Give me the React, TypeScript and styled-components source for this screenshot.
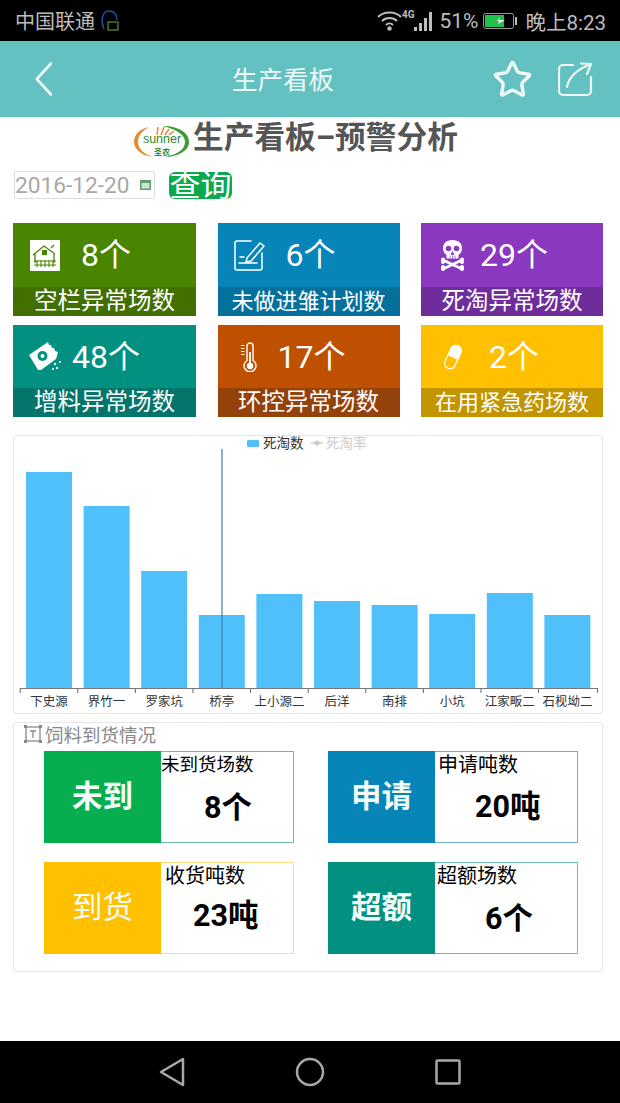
import React from 'react';
import styled, { createGlobalStyle } from 'styled-components';
import { Star } from 'lucide-react';

const FONT = `Roboto, "Noto Sans CJK SC", "Noto Sans", sans-serif`;

const GlobalStyle = createGlobalStyle`
  html, body { margin: 0; padding: 0; background: #fff; }
  body { font-family: ${FONT}; }
`;

const tiles = [
  { value: '8个', label: '空栏异常场数', labelSize: 23.5, color: '#4a8500', band: '#417001', pad: 17, gap: 21, icon: 'barn' },
  { value: '6个', label: '未做进雏计划数', labelSize: 22, color: '#0785b8', band: '#05709c', pad: 16, gap: 21, icon: 'note' },
  { value: '29个', label: '死淘异常场数', labelSize: 23.5, color: '#8a38c0', band: '#6f2d9c', pad: 20, gap: 16, icon: 'skull' },
  { value: '48个', label: '增料异常场数', labelSize: 23.5, color: '#029181', band: '#03756b', pad: 16, gap: 11, icon: 'bag' },
  { value: '17个', label: '环控异常场数', labelSize: 23.5, color: '#bf5000', band: '#94410a', pad: 23, gap: 21, icon: 'thermo' },
  { value: '2个', label: '在用紧急药场数', labelSize: 22, color: '#ffc000', band: '#c29500', pad: 22, gap: 26, icon: 'pill' },
];

const bars = [
  { name: '下史源', top: 472 },
  { name: '界竹一', top: 506 },
  { name: '罗家坑', top: 571 },
  { name: '桥亭', top: 615 },
  { name: '上小源二', top: 594 },
  { name: '后洋', top: 601 },
  { name: '南排', top: 605 },
  { name: '小坑', top: 614 },
  { name: '江家畈二', top: 593 },
  { name: '石枧坳二', top: 615 },
];

const feeds = [
  { tag: '未到', tagWeight: 700, color: '#07ae50', line: '#6fb8a8', tagWidth: 117, title: '未到货场数', titleSize: 18.5, titlePad: 0, value: '8个', valuePad: 43, valueTop: 10 },
  { tag: '申请', tagWeight: 700, color: '#0785b8', line: '#6fb0c8', tagWidth: 107, title: '申请吨数', titleSize: 20, titlePad: 3, value: '20吨', valuePad: 40, valueTop: 9 },
  { tag: '到货', tagWeight: 400, color: '#ffc000', line: '#ffe07a', tagWidth: 117, title: '收货吨数', titleSize: 20, titlePad: 4, value: '23吨', valuePad: 32, valueTop: 7 },
  { tag: '超额', tagWeight: 700, color: '#029181', line: '#6fb8b8', tagWidth: 107, title: '超额场数', titleSize: 20, titlePad: 2, value: '6个', valuePad: 50, valueTop: 10 },
];

const Page = styled.div`
  width: 620px;
  height: 1103px;
  display: flex;
  flex-direction: column;
  overflow: hidden;
  background: #fff;
`;

const StatusBar = styled.div`
  height: 41px;
  background: #000;
  color: #bdbdbd;
  font-size: 20px;
  display: flex;
  align-items: center;
  justify-content: space-between;
  padding: 0 14px 0 15px;
`;

const StatusGroup = styled.div`
  display: flex;
  align-items: center;
`;

const Battery = styled.span`
  font-size: 21px;
  margin: 0 5px 0 5px;
`;

const Clock = styled.span`
  font-size: 20.5px;
  margin-left: 8px;
`;

const Header = styled.div`
  height: 76px;
  background: #64c1c1;
  color: #eef8f8;
  display: flex;
  align-items: center;
  padding: 0 26px 0 35px;
`;

const HeaderTitle = styled.div`
  margin: 2px 0 0 180px;
  font-size: 25.5px;
  line-height: 38px;
`;

const HeaderActions = styled.div`
  margin-left: auto;
  display: flex;
  align-items: center;
  gap: 25px;
`;

const Content = styled.div`
  flex: 1;
`;

const TitleRow = styled.div`
  height: 40px;
  display: flex;
  align-items: flex-start;
  padding-left: 133px;
  gap: 3px;
`;

const LogoSlot = styled.div`
  margin-top: 8px;
`;

const MainTitle = styled.div`
  font-size: 30.7px;
  font-weight: 700;
  color: #555;
  line-height: 42px;
`;

const QueryRow = styled.div`
  margin-top: 14px;
  height: 28px;
  display: flex;
  align-items: center;
  padding-left: 14px;
  gap: 14px;
`;

const DateBox = styled.div`
  width: 141px;
  height: 28px;
  box-sizing: border-box;
  border: 1px solid #ddd;
  border-radius: 2px;
  color: #a8a8a8;
  font-size: 22.7px;
  display: flex;
  align-items: center;
  justify-content: space-between;
  padding: 0 3px 0 0;
`;

const QueryButton = styled.div`
  width: 63px;
  height: 27px;
  border-radius: 6px;
  background: #09a94c;
  color: #fff;
  font-size: 31px;
  line-height: 27px;
  text-align: center;
  white-space: nowrap;
`;

const TileGrid = styled.div`
  margin: 24px 17px 0 13px;
  display: grid;
  grid-template-columns: 183px 182px 182px;
  grid-template-rows: 93px 92px;
  column-gap: 21.5px;
  row-gap: 9px;
`;

const Tile = styled.div<{ $color: string }>`
  background: ${(p) => p.$color};
  color: #fff;
  display: flex;
  flex-direction: column;
`;

const TileHead = styled.div<{ $pad: number; $gap: number }>`
  flex: 1;
  display: flex;
  align-items: center;
  padding-left: ${(p) => p.$pad}px;
  gap: ${(p) => p.$gap}px;
`;

const TileValue = styled.div`
  font-size: 32px;
  line-height: 40px;
`;

const TileBand = styled.div<{ $color: string; $size: number }>`
  height: 29px;
  background: ${(p) => p.$color};
  font-size: ${(p) => p.$size}px;
  line-height: 29px;
  text-align: center;
  white-space: nowrap;
`;

const ChartCard = styled.div`
  margin: 18px 17px 0 13px;
  height: 279px;
  box-sizing: border-box;
  border: 1px solid #e6e6e6;
  border-radius: 3px;
`;

const ChartSvg = styled.svg`
  display: block;
  overflow: visible;
`;

const FeedCard = styled.div`
  margin: 8px 17px 0 13px;
  height: 250px;
  box-sizing: border-box;
  border: 1px solid #e6e6e6;
  border-radius: 3px;
  padding-left: 10px;
`;

const FeedHeading = styled.div`
  height: 28px;
  box-sizing: border-box;
  padding-bottom: 6px;
  display: flex;
  align-items: center;
  gap: 3px;
  color: #888;
  font-size: 18.5px;
`;

const FeedGrid = styled.div`
  margin-left: 20px;
  display: grid;
  grid-template-columns: 250px 250px;
  grid-template-rows: 92px 92px;
  column-gap: 34px;
  row-gap: 19px;
`;

const FeedItem = styled.div<{ $line: string }>`
  display: flex;
  box-sizing: border-box;
  border: 1px solid ${(p) => p.$line};
`;

const FeedTag = styled.div<{ $color: string; $width: number; $weight: number }>`
  width: ${(p) => p.$width}px;
  margin: -1px 0 -1px -1px;
  background: ${(p) => p.$color};
  color: #f4fbf6;
  font-size: 30.5px;
  font-weight: ${(p) => p.$weight};
  display: flex;
  align-items: center;
  justify-content: center;
  padding-bottom: 6px;
  box-sizing: border-box;
`;

const FeedBody = styled.div`
  flex: 1;
  color: #000;
`;

const FeedTitle = styled.div<{ $size: number; $pad: number }>`
  font-size: ${(p) => p.$size}px;
  line-height: 26px;
  padding-left: ${(p) => p.$pad}px;
  white-space: nowrap;
`;

const FeedValue = styled.div<{ $pad: number; $top: number }>`
  margin-top: ${(p) => p.$top}px;
  font-size: 30.5px;
  font-weight: 700;
  line-height: 40px;
  padding-left: ${(p) => p.$pad}px;
`;

const NavBar = styled.div`
  height: 62px;
  background: #000;
  display: flex;
  align-items: center;
  justify-content: center;
  gap: 110px;
`;

const TileIcon = ({ name }: { name: string }) => {
  switch (name) {
    case 'barn':
      return (
        <svg width="30" height="31" viewBox="0 0 30 31">
          <rect width="30" height="31" fill="#fff" rx="1" />
          <path d="M3 15 14 6l11 8M5 14v9M24 14v9M21 8l3-3" fill="none" stroke="#4a8500" strokeWidth="1.3" />
          <rect x="12" y="10" width="5" height="5" fill="#4a8500" />
          <path d="M4 21h22M4 25h22M7 20v7M11 20v7M15 20v7M19 20v7M23 20v7" stroke="#4a8500" strokeWidth="1.1" />
        </svg>
      );
    case 'note':
      return (
        <svg width="31" height="31" viewBox="0 0 31 31" fill="none" stroke="#fff" strokeWidth="1.5" strokeLinecap="round" strokeLinejoin="round">
          <path d="M17 1H3a2 2 0 0 0-2 2v25a2 2 0 0 0 2 2h23a2 2 0 0 0 2-2V13" />
          <path d="M13 18 26 3l4 3-13 15-5 1zM6 17h4M5 23h18" />
        </svg>
      );
    case 'skull':
      return (
        <svg width="23" height="31" viewBox="0 0 23 31" fill="#fff">
          <path d="M11.500 0C5 0 2 3.500 2 8.500c0 3 1.500 5 3.500 6.500v3.500h12V15c2-1.500 3.500-3.500 3.500-6.500C21 3.500 18 0 11.500 0z" />
          <circle cx="7.500" cy="8.500" r="2.800" fill="#8a38c0" />
          <circle cx="15.500" cy="8.500" r="2.800" fill="#8a38c0" />
          <path d="M11.500 11.500l-1.500 3h3zM9 15.500v3M11.500 15.500v3M14 15.500v3" fill="#8a38c0" stroke="#8a38c0" strokeWidth="0.7" />
          <path d="M3 20.500l17 8M20 20.500 3 28.500" stroke="#fff" strokeWidth="2.800" />
          <g>
            <circle cx="2" cy="19.500" r="2" /><circle cx="21" cy="19.500" r="2" />
            <circle cx="2" cy="22" r="2" /><circle cx="21" cy="22" r="2" />
            <circle cx="2" cy="27" r="2" /><circle cx="21" cy="27" r="2" />
            <circle cx="2" cy="29" r="2" /><circle cx="21" cy="29" r="2" />
          </g>
        </svg>
      );
    case 'bag':
      return (
        <svg width="32" height="29" viewBox="0 0 32 29">
          <path d="M0 13 19 0l1 3 2 0 1 3 2 0 1 3 3 1-1 4-1 3-15 11-3 0z" fill="#fff" />
          <circle cx="13.500" cy="14" r="5" fill="#029181" />
          <circle cx="13.500" cy="14" r="2" fill="#fff" />
          <g fill="#fff">
            <circle cx="31" cy="20" r="1" /><circle cx="26" cy="22" r="1.200" />
            <circle cx="28" cy="26" r="1.200" /><circle cx="24" cy="27" r="1" />
          </g>
        </svg>
      );
    case 'thermo':
      return (
        <svg width="16" height="30" viewBox="0 0 16 30" fill="none" stroke="#fff" strokeWidth="1.4">
          <path d="M9 1a3 3 0 0 1 3 3v14.500a6 6 0 1 1-6 0V4a3 3 0 0 1 3-3z" />
          <circle cx="9" cy="24" r="3.200" fill="#fff" stroke="none" />
          <path d="M9 24V10" strokeWidth="1.800" />
          <path d="M0 3.500h3.500M0 6.500h3.500M0 9.500h3.500M0 12.500h3.500" strokeWidth="1" />
        </svg>
      );
    default:
      return (
        <svg width="20" height="26" viewBox="0 0 20 26">
          <g transform="rotate(25 10 13)">
            <path d="M4 13V6a6 6 0 0 1 12 0v7z" fill="#fff" />
            <path d="M4.600 13v7a5.400 5.400 0 0 0 10.800 0v-7z" fill="none" stroke="#fff" strokeWidth="1.200" />
          </g>
        </svg>
      );
  }
};

const Logo = () => (
  <svg width="57" height="33" viewBox="0 0 57 33" style={{ display: 'block' }}>
    <path d="M16 2C6 4 1 10 1 17c0 7 8 14 19 15C11 29 5 24 5 17 5 10 10 5 16 2z" fill="#e8892b" />
    <path d="M30 1c14 0 26 6 26 16 0 9-12 15-24 15 11-2 20-7 20-15 0-8-10-13-22-16z" fill="#3b9a33" />
    <path d="M24 10l1-8M28 10l3-8M32 10l4-6M36 10l5-4" stroke="#e8892b" strokeWidth="1.500" />
    <text x="29" y="18" textAnchor="middle" fontSize="12.500" fill="#2e8b2e" fontFamily="Liberation Sans, sans-serif">sunner</text>
    <text x="29" y="30" textAnchor="middle" fontSize="8" fontWeight="700" fill="#2e8b2e" fontFamily="Noto Sans CJK SC, sans-serif">圣农</text>
  </svg>
);

// bars are measured in page pixels, the card starts at y 435
const Chart = () => (
  <ChartSvg width="588" height="277" viewBox="14 436 588 277">
    <rect x="247" y="440" width="12" height="7" rx="1" fill="#4fc0fa" />
    <text x="263" y="448" fontSize="13.500" fill="#333" fontFamily="Noto Sans CJK SC, sans-serif">死淘数</text>
    <path d="M311 443h12" stroke="#ccc" strokeWidth="1.500" />
    <circle cx="317" cy="443" r="2.500" fill="#ccc" />
    <text x="326" y="448" fontSize="13.500" fill="#ccc" fontFamily="Noto Sans CJK SC, sans-serif">死淘率</text>
    {bars.map((b, i) => {
      const x = 26 + i * 57.6;
      return (
        <g key={b.name}>
          <rect x={x} y={b.top} width="46" height={688 - b.top} fill="#4fc0fa" />
          <path d={`M${x - 5.800} 688v5`} stroke="#666" strokeWidth="1" />
          <text x={x + 23} y="705.500" textAnchor="middle" fontSize="12.500" fill="#333" fontFamily="Noto Sans CJK SC, sans-serif">{b.name}</text>
        </g>
      );
    })}
    <path d="M20 688.500h578M597.500 688v5" stroke="#777" strokeWidth="1" fill="none" />
    <path d="M222 449v239" stroke="#3d7fa8" strokeWidth="1.200" />
  </ChartSvg>
);

export default function App() {
  return (
    <Page>
      <GlobalStyle />
      <StatusBar>
        <StatusGroup>
          中国联通
          <svg width="20" height="24" viewBox="0 0 20 24" fill="none" style={{ marginLeft: 5 }}>
            <path d="M4 20C0 10 3 2 9 2s8 5 8 9" stroke="#1f4f9a" strokeWidth="1.500" />
            <rect x="8" y="13" width="10" height="8" stroke="#5c8f3a" strokeWidth="1.200" />
          </svg>
        </StatusGroup>
        <StatusGroup>
          <svg width="25" height="20" viewBox="0 0 25 20" fill="none" stroke="#bdbdbd" strokeWidth="2">
            <path d="M1 6c6-6 17-6 23 0M5 10c4-4 11-4 15 0M9 14c2-2 5-2 7 0" />
            <circle cx="12.500" cy="17.500" r="2.200" fill="#bdbdbd" stroke="none" />
          </svg>
          <svg width="32" height="24" viewBox="0 0 32 24" fill="#bdbdbd">
            <text x="0" y="9" fontSize="10" fontWeight="700" fontFamily="Roboto, sans-serif">4G</text>
            <rect x="12" y="18" width="3" height="4" />
            <rect x="17" y="14" width="3" height="8" />
            <rect x="22" y="9" width="3" height="13" />
            <rect x="27" y="3" width="3" height="19" />
          </svg>
          <Battery>51%</Battery>
          <svg width="34" height="16" viewBox="0 0 34 16">
            <rect x="0.500" y="0.500" width="30" height="15" rx="2" fill="none" stroke="#999" />
            <rect x="2" y="2" width="19" height="12" fill="#1fc24a" />
            <path d="M7 8h7l3-4-1 3h6l-7 4 1-3z" fill="#fff" />
            <rect x="32" y="4" width="2" height="8" fill="#bbb" />
          </svg>
          <Clock>晚上8:23</Clock>
        </StatusGroup>
      </StatusBar>

      <Header>
        <svg width="17" height="34" viewBox="0 0 17 34" fill="none" stroke="currentColor" strokeWidth="2.600" strokeLinecap="round" strokeLinejoin="round">
          <path d="M16 1.500 1.800 17 16 32.500" />
        </svg>
        <HeaderTitle>生产看板</HeaderTitle>
        <HeaderActions>
          <Star size={41} strokeWidth={2} />
          <svg width="36" height="38" viewBox="0 0 36 38" fill="none" stroke="currentColor" strokeWidth="2.200" strokeLinecap="round" strokeLinejoin="round">
            <path d="M15 5H5a4 4 0 0 0-4 4v22a4 4 0 0 0 4 4h24a4 4 0 0 0 4-4V17" />
            <path d="M9 27C11 16 20 9 33 4M23 3.500l10 .5-4 10" />
          </svg>
        </HeaderActions>
      </Header>

      <Content>
        <TitleRow>
          <LogoSlot><Logo /></LogoSlot>
          <MainTitle>生产看板–预警分析</MainTitle>
        </TitleRow>

        <QueryRow>
          <DateBox>
            2016-12-20
            <svg width="11" height="10" viewBox="0 0 11 10">
              <rect width="11" height="10" fill="#5f9f70" />
              <rect x="1.500" y="3" width="8" height="5.500" fill="#cfe3d4" />
            </svg>
          </DateBox>
          <QueryButton>查询</QueryButton>
        </QueryRow>

        <TileGrid>
          {tiles.map((t) => (
            <Tile key={t.label} $color={t.color}>
              <TileHead $pad={t.pad} $gap={t.gap}>
                <TileIcon name={t.icon} />
                <TileValue>{t.value}</TileValue>
              </TileHead>
              <TileBand $color={t.band} $size={t.labelSize}>{t.label}</TileBand>
            </Tile>
          ))}
        </TileGrid>

        <ChartCard>
          <Chart />
        </ChartCard>

        <FeedCard>
          <FeedHeading>
            <svg width="18" height="18" viewBox="0 0 18 18" fill="none" stroke="#888" strokeWidth="1.300">
              <rect x="2" y="2" width="14" height="14" />
              <path d="M6 6h6M9 6v7" />
              <g fill="#888" stroke="none">
                <rect x="0" y="0" width="3" height="3" /><rect x="15" y="0" width="3" height="3" />
                <rect x="0" y="15" width="3" height="3" /><rect x="15" y="15" width="3" height="3" />
              </g>
            </svg>
            饲料到货情况
          </FeedHeading>
          <FeedGrid>
            {feeds.map((f) => (
              <FeedItem key={f.tag} $line={f.line}>
                <FeedTag $color={f.color} $width={f.tagWidth} $weight={f.tagWeight}>{f.tag}</FeedTag>
                <FeedBody>
                  <FeedTitle $size={f.titleSize} $pad={f.titlePad}>{f.title}</FeedTitle>
                  <FeedValue $pad={f.valuePad} $top={f.valueTop}>{f.value}</FeedValue>
                </FeedBody>
              </FeedItem>
            ))}
          </FeedGrid>
        </FeedCard>
      </Content>

      <NavBar>
        <svg width="26" height="32" viewBox="0 0 26 32" fill="none" stroke="#a8a8a8" strokeWidth="2.500" strokeLinejoin="round">
          <path d="M24 3v26L2 16z" />
        </svg>
        <svg width="30" height="30" viewBox="0 0 30 30" fill="none" stroke="#a8a8a8" strokeWidth="2.500">
          <circle cx="15" cy="15" r="13" />
        </svg>
        <svg width="26" height="26" viewBox="0 0 26 26" fill="none" stroke="#a8a8a8" strokeWidth="2.500">
          <rect x="1.500" y="1.500" width="23" height="23" rx="1" />
        </svg>
      </NavBar>
    </Page>
  );
}
